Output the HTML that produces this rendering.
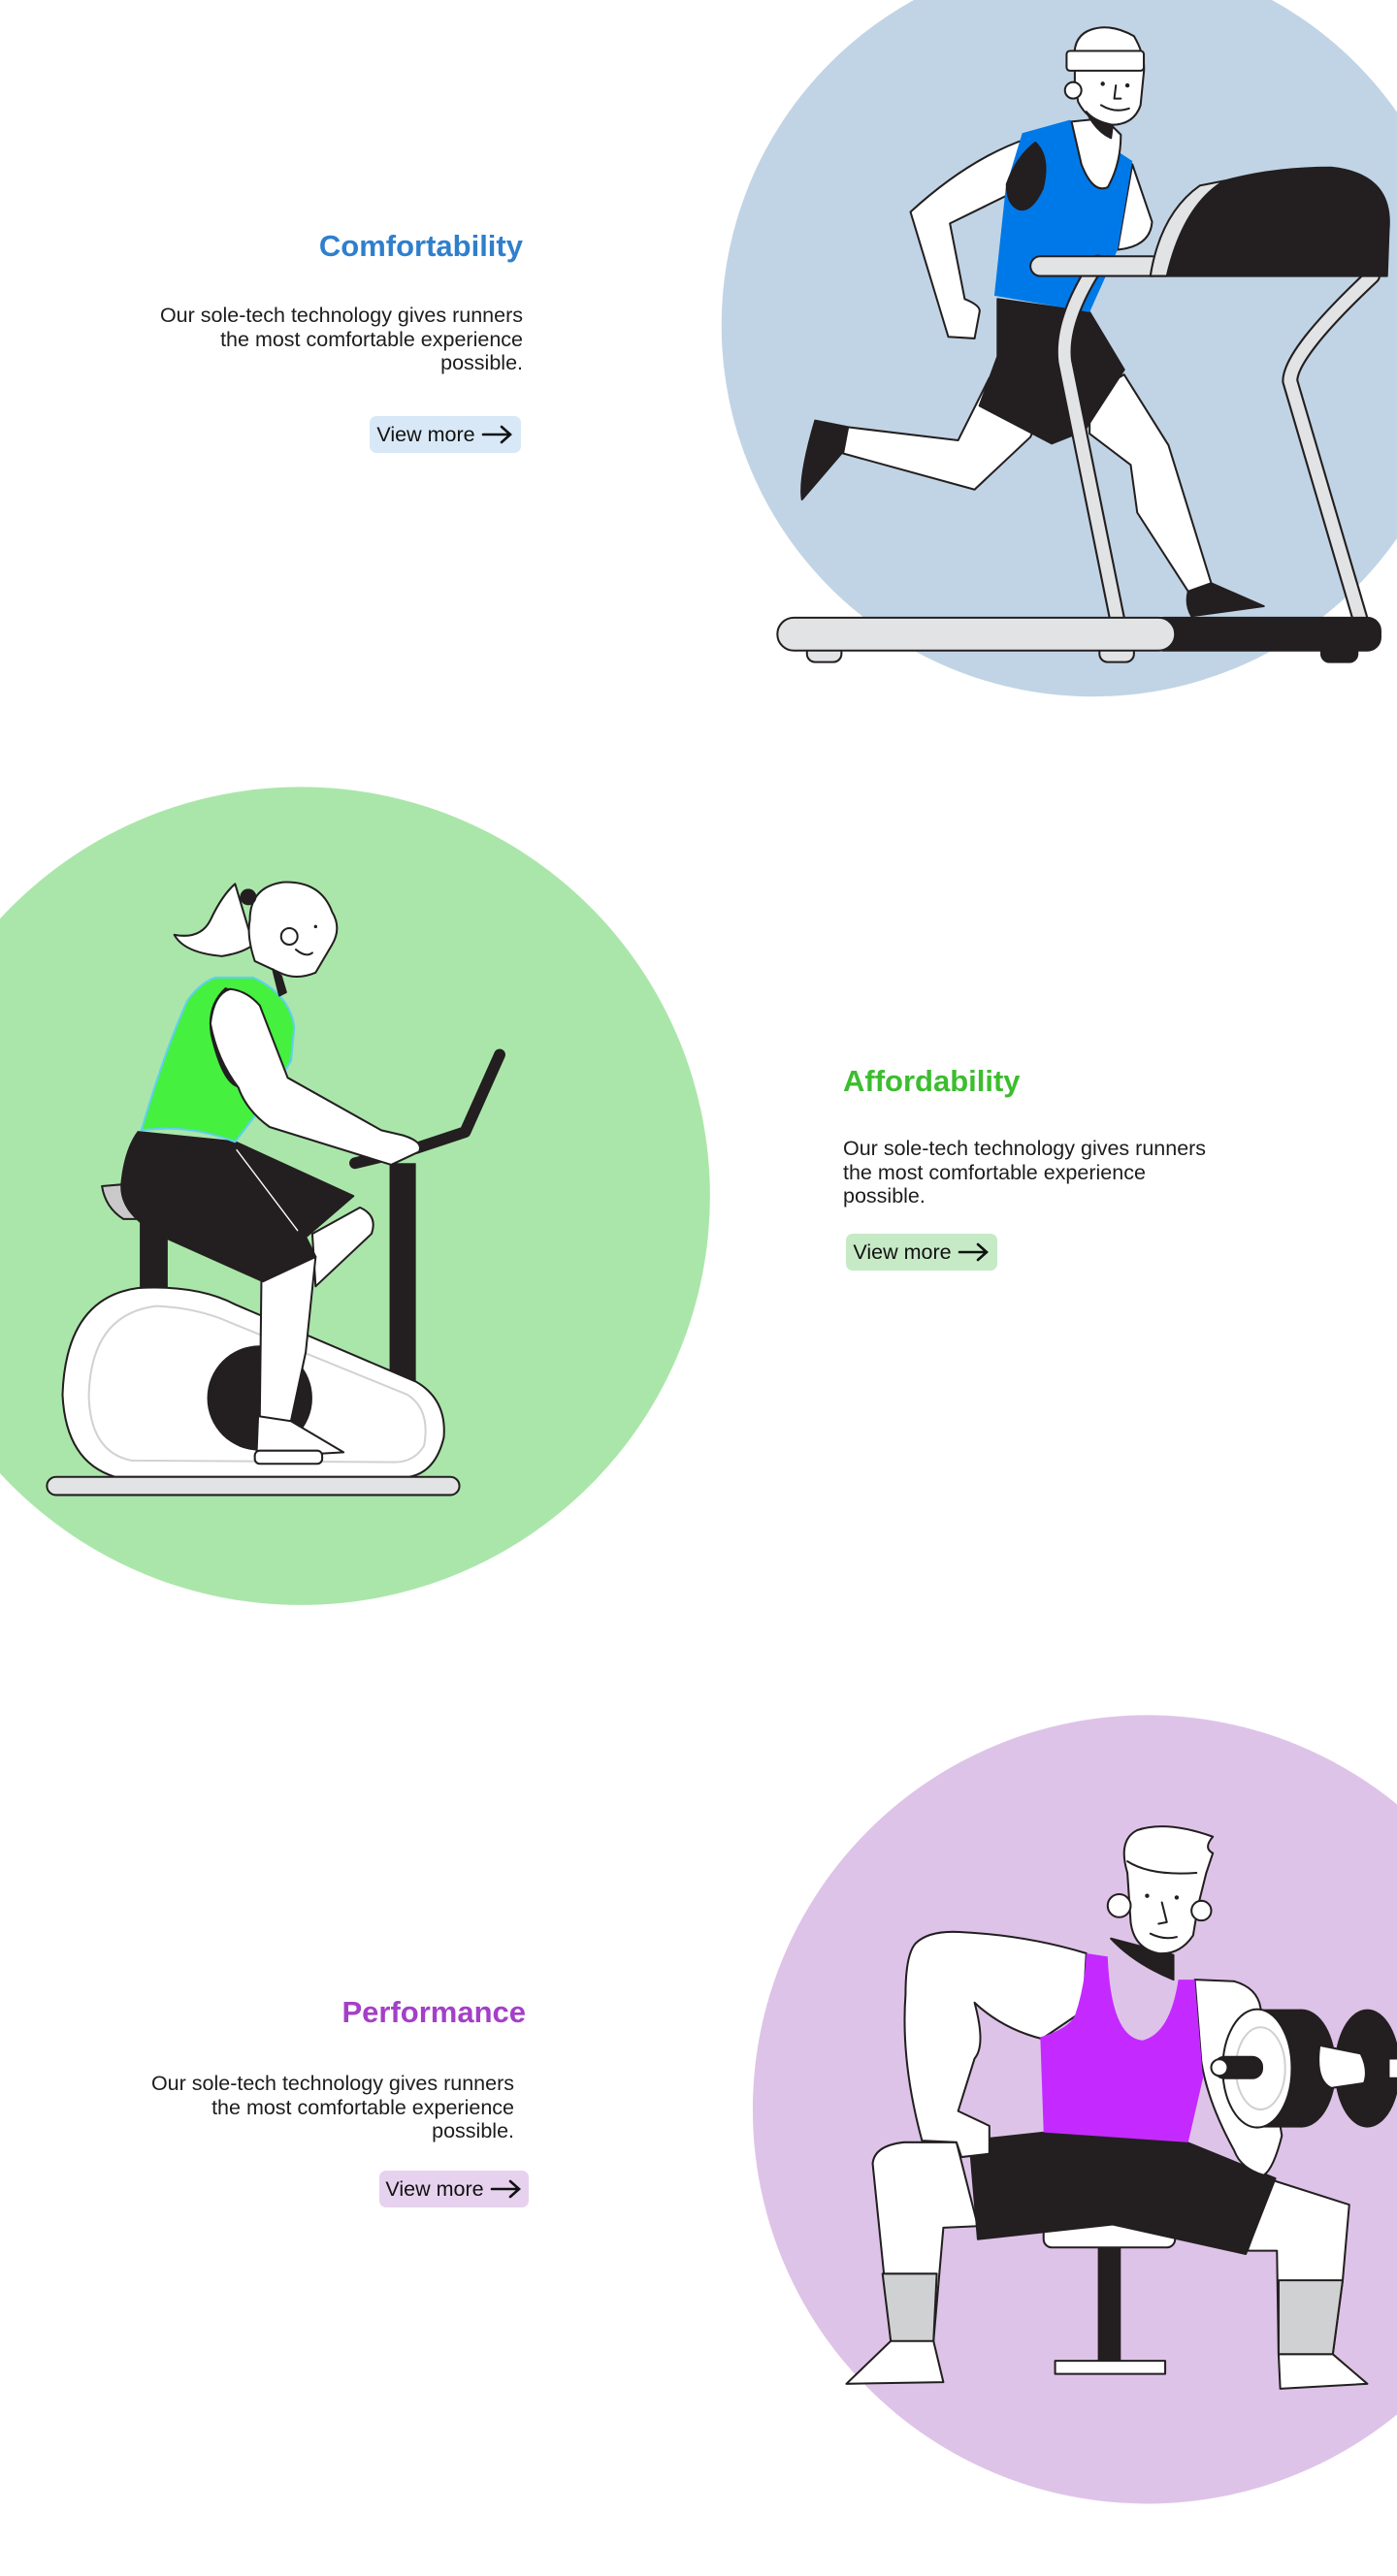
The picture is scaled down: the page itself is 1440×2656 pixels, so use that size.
<!DOCTYPE html>
<html><head><meta charset="utf-8"><style>
html,body{margin:0;padding:0;background:#fff;}
body{width:1440px;height:2656px;position:relative;overflow:hidden;font-family:"Liberation Sans",sans-serif;color:#1d1d1d;}
svg.bg{position:absolute;left:0;top:0;}
.t{position:absolute;font-size:31px;font-weight:bold;line-height:36px;white-space:nowrap;}
.b{position:absolute;font-size:21.5px;line-height:24.5px;white-space:nowrap;}
.btn{position:absolute;height:38px;border-radius:7px;font-size:21.5px;display:flex;align-items:center;justify-content:center;gap:6px;color:#111;}
.btn svg{width:34px;height:22px}
</style></head><body>
<svg class="bg" width="1440" height="2656" viewBox="0 0 850 1568" fill="none" stroke="#231f20" stroke-width="1.2" stroke-linejoin="round" stroke-linecap="round">
<!-- Section 1 treadmill -->
<circle cx="665" cy="198" r="226" fill="#c1d4e5" stroke="none"/>
<path d="M626,84 Q640,90 639,103 L631,110 L578,136 L587,182 Q597,186 596,190 L593,206 L577,205 L554,129 Q590,96 626,84Z" fill="#fff"/>
<path d="M689,100 L701,135 Q700,150 680,152Z" fill="#fff"/>
<path d="M602,230 L583,268 L516,260 L513,276 L593,298 L627,266 L634,250Z" fill="#fff"/>
<path d="M496,256 L516,260 L512,276 L488,304 Q486,290 496,256Z" fill="#231f20"/>
<path d="M663,240 L684,228 L711,271 L737,355 L723,360 L692,312 L688,283 L663,264Z" fill="#fff"/>
<path d="M723,360 L737,355 L769,369 L725,375 Q721,368 723,360Z" fill="#231f20"/>
<path d="M607,182 L663,190 L684,225 L660,262 L640,270 L596,247 L607,217Z" fill="#231f20"/>
<path d="M622,81 L651,73 L689,98 L680,152 L663,190 L605,180 L612,114Z" fill="#0079e8" stroke="none"/>
<path d="M612,112 Q618,95 630,86 Q640,95 635,115 Q628,130 620,128 Q612,125 612,112Z" fill="#231f20" stroke="none"/>
<path d="M652,74 L658,100 Q665,118 674,114 Q682,100 682,82 L672,72Z" fill="#fff"/>
<path d="M654,38 Q652,22 664,18 Q676,14 690,22 Q697,34 696,44 L694,64 Q690,76 676,76 Q662,74 656,62 L654,50Z" fill="#fff"/>
<path d="M661,68 Q667,80 676,84 L677,76 Q666,74 661,68Z" fill="#231f20"/>
<circle cx="653" cy="55" r="5" fill="#fff"/>
<rect x="649" y="31" width="47" height="12" rx="2" fill="#fff"/>
<circle cx="671" cy="51" r="1.3" fill="#231f20" stroke="none"/><circle cx="686" cy="52" r="1.3" fill="#231f20" stroke="none"/>
<path d="M679,52 L678,60 L682,60 M670,64 Q678,69 687,66"/>
<path d="M668,160 Q645,195 648,220 L680,378" stroke="#231f20" stroke-width="10"/>
<path d="M668,160 Q645,195 648,220 L680,378" stroke="#e2e3e5" stroke-width="7.5"/>
<path d="M835,168 Q785,215 785,232 L828,378" stroke="#231f20" stroke-width="10"/>
<path d="M835,168 Q785,215 785,232 L828,378" stroke="#e2e3e5" stroke-width="7.5"/>
<rect x="627" y="156" width="80" height="12" rx="6" fill="#e2e3e5"/>
<path d="M700,168 Q705,135 730,115 Q765,102 810,102 Q848,106 845,140 L844,168Z" fill="#231f20"/>
<path d="M700,168 Q706,130 730,113 L745,110 Q720,125 710,168Z" fill="#e2e3e5"/>
<rect x="491" y="390" width="21" height="13" rx="5" fill="#e2e3e5"/>
<rect x="669" y="390" width="21" height="13" rx="5" fill="#e2e3e5"/>
<rect x="804" y="390" width="22" height="13" rx="5" fill="#231f20"/>
<rect x="700" y="376" width="140" height="20" rx="8" fill="#231f20"/>
<rect x="473" y="376" width="242" height="20" rx="10" fill="#e2e3e5"/>

<!-- Section 2 bike -->
<circle cx="183" cy="728" r="249" fill="#aae6aa" stroke="none"/>
<rect x="85" y="741" width="17" height="46" fill="#231f20" stroke="none"/>
<path d="M62,722 L86,720 L88,742 L75,742 Q64,735 62,722Z" fill="#c9c9c9"/>
<rect x="237" y="708" width="16" height="134" fill="#231f20" stroke="none"/>
<path d="M216,708 L253,699 L283,689 L304,642" stroke="#231f20" stroke-width="7"/>
<path d="M38,849 Q40,790 84,784 Q120,782 143,794 L253,841 Q272,852 270,875 Q265,896 249,899 L70,899 Q40,890 38,849Z" fill="#fff"/>
<path d="M54,850 Q55,800 95,795 Q120,796 140,805 L248,849 Q262,858 258,880 Q252,890 240,890 L80,889 Q55,884 54,850Z" stroke="#d2d2d2"/>
<circle cx="158" cy="851" r="32" fill="#231f20" stroke="none"/>
<rect x="28.5" y="899" width="251" height="11" rx="5.5" fill="#e2e3e5"/>
<path d="M190,751 L219,735 Q230,740 226,751 L192,783Z" fill="#fff"/>
<path d="M159,780 L192,765 L186,823 L177,865 L158,865Z" fill="#fff"/>
<path d="M157,862 L177,865 L209,884 L156,887Z" fill="#fff"/>
<rect x="155" y="883" width="41" height="8" rx="3" fill="#fff"/>
<path d="M84,689 L143,695 L215,728 L186,753 L192,765 L160,780 L102,754 Q72,740 74,720 Q76,700 84,689Z" fill="#231f20"/>
<path d="M144,700 L181,749" stroke="#fff" stroke-width="0.8"/>
<path d="M86,688 Q100,640 114,609 Q122,598 131,595 L154,595 Q176,605 179,625 L177,646 L156,678 L143,695 Q115,684 86,688Z" fill="#45f03f" stroke="#5fd0ef"/>
<path d="M128,630 Q125,612 137,601 L152,606 Q145,640 145,662 Q135,660 128,630Z" fill="#231f20" stroke="none"/>
<path d="M128,623 Q130,605 140,602 Q150,603 158,612 L175,656 L232,688 L245,691 Q258,695 255,701 L238,709 L164,686 Q150,676 145,662 Q132,645 128,623Z" fill="#fff"/>
<path d="M143,538 Q135,545 128,560 Q122,572 106,569 Q112,580 135,582 Q148,580 154,575Z" fill="#fff"/>
<path d="M152,560 Q152,540 172,537 Q195,536 202,555 Q208,565 202,575 L192,592 Q180,597 170,592 L155,585 Q150,570 152,560Z" fill="#fff"/>
<path d="M166,590 L170,606 L174,604 L171,594Z" fill="#231f20"/>
<circle cx="151" cy="546" r="5" fill="#231f20" stroke="none"/>
<circle cx="176" cy="570" r="5" fill="#fff"/>
<circle cx="192" cy="564" r="1" fill="#231f20" stroke="none"/>
<path d="M180,578 Q186,583 190,580"/>

<!-- Section 3 lifter -->
<circle cx="698" cy="1284" r="240" fill="#dec3e8" stroke="none"/>
<rect x="635" y="1352" width="80" height="16" rx="5" fill="#fff"/>
<rect x="668" y="1368" width="14" height="70" fill="#231f20" stroke="none"/>
<rect x="642" y="1437" width="67" height="8" fill="#fff"/>
<path d="M582,1304 L595,1355 L574,1356 L568,1425 L574,1450 L515,1451 L542,1425 L531,1317 Q532,1306 550,1304Z" fill="#fff"/>
<path d="M537,1384 L570,1384 L568,1425 L542,1425Z" fill="#d0d1d3"/>
<path d="M774,1327 L821,1342 L817,1388 L811,1433 L832,1451 L779,1454 L778,1433 L777,1370 L759,1370Z" fill="#fff"/>
<path d="M778,1388 L817,1388 L811,1433 L778,1433Z" fill="#d0d1d3"/>
<path d="M590,1303 L636,1298 L722,1304 L776,1326 L758,1372 L677,1354 L595,1363Z" fill="#231f20"/>
<path d="M557,1183 Q565,1175 584,1176 Q625,1178 661,1189 L659,1224 L634,1241 Q610,1235 593,1219 Q600,1245 593,1253 L583,1285 L602,1294 L602,1311 L585,1313 L582,1304 L561,1303 Q548,1255 551,1214 Q551,1190 557,1183Z" fill="#fff"/>
<path d="M727,1205 L751,1206 Q765,1210 767,1222 L780,1300 Q775,1320 769,1324 Q755,1320 751,1309 Q735,1280 731,1255Z" fill="#fff"/>
<path d="M661,1189 L674,1191 Q676,1240 695,1242 Q712,1238 717,1205 L727,1205 L732,1265 L723,1304 L635,1298 L633,1240 Q650,1235 654,1227 Q660,1210 661,1189Z" fill="#c42aff" stroke="none"/>
<path d="M676,1180 Q690,1195 714,1205 L714,1190Z" fill="#231f20"/>
<ellipse cx="832" cy="1259" rx="20" ry="36" fill="#231f20" stroke="none"/>
<rect x="845" y="1253" width="10" height="12" fill="#fff"/>
<ellipse cx="792" cy="1259" rx="21" ry="36" fill="#231f20" stroke="none"/>
<rect x="765" y="1223" width="27" height="72" fill="#231f20" stroke="none"/>
<ellipse cx="765" cy="1259" rx="21" ry="36" fill="#fff"/>
<ellipse cx="767" cy="1259" rx="15" ry="25" stroke="#d0d0d0"/>
<rect x="739" y="1252" width="29" height="13" rx="6" fill="#231f20"/>
<circle cx="742" cy="1258.5" r="5" fill="#fff"/>
<path d="M803,1245 L828,1250 Q833,1260 830,1268 L810,1271 Q800,1266 803,1245Z" fill="#fff"/>
<path d="M686,1140 Q680,1120 692,1114 Q710,1108 738,1118 Q732,1125 738,1128 L734,1140 L729,1160 L726,1178 Q718,1190 705,1189 Q690,1186 688,1170Z" fill="#fff"/>
<path d="M686,1133 Q700,1142 728,1140" />
<circle cx="681" cy="1160" r="7" fill="#fff"/>
<circle cx="731" cy="1163" r="6" fill="#fff"/>
<circle cx="698" cy="1154" r="1.3" fill="#231f20" stroke="none"/><circle cx="716" cy="1155" r="1.3" fill="#231f20" stroke="none"/>
<path d="M707,1158 L710,1170 L705,1171 M700,1177 Q708,1181 716,1179"/>
</svg>

<div class="t" style="right:901px;top:236px;color:#2f7fcd">Comfortability</div>
<div class="b" style="right:901px;top:313px;text-align:right">Our sole-tech technology gives runners<br>the most comfortable experience<br>possible.</div>
<div class="btn" style="left:381px;top:429px;width:156px;background:#d8e8f7">View more<svg viewBox="0 0 34 22" fill="none" stroke="#111" stroke-width="2.6" stroke-linecap="round"><path d="M2,11 H30 M21,3 L30,11 L21,19"/></svg></div>

<div class="t" style="left:869px;top:1097px;color:#3cbd2f">Affordability</div>
<div class="b" style="left:869px;top:1172px">Our sole-tech technology gives runners<br>the most comfortable experience<br>possible.</div>
<div class="btn" style="left:872px;top:1272px;width:156px;background:#c6eac6">View more<svg viewBox="0 0 34 22" fill="none" stroke="#111" stroke-width="2.6" stroke-linecap="round"><path d="M2,11 H30 M21,3 L30,11 L21,19"/></svg></div>

<div class="t" style="right:898px;top:2057px;color:#a43fc8">Performance</div>
<div class="b" style="right:910px;top:2136px;text-align:right">Our sole-tech technology gives runners<br>the most comfortable experience<br>possible.</div>
<div class="btn" style="left:391px;top:2238px;width:154px;background:#e6d2ee">View more<svg viewBox="0 0 34 22" fill="none" stroke="#111" stroke-width="2.6" stroke-linecap="round"><path d="M2,11 H30 M21,3 L30,11 L21,19"/></svg></div>
</body></html>
